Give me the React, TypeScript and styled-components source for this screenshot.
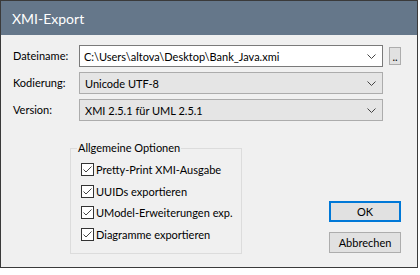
import React from "react";
import styled, { createGlobalStyle } from "styled-components";

const Global = createGlobalStyle`
  html, body { margin: 0; padding: 0; background: #ffffff; }
  body { font-family: Lato, "Liberation Sans", sans-serif; font-size: 11px; color: #000; }
  * { box-sizing: border-box; }
`;

const Window = styled.div`
  width: 418px;
  height: 268px;
  border: 1px solid #3a3a3a;
  background: #f0f0f0;
  display: flex;
  flex-direction: column;
`;

const TitleBar = styled.div`
  height: 34px;
  background: #65778a;
  color: #ffffff;
  font-size: 14px;
  display: flex;
  align-items: center;
  padding-left: 11px;
`;

const Body = styled.div`
  flex: 1;
  padding: 10px 16px 0 12px;
  display: flex;
  flex-direction: column;
`;

const Form = styled.div`
  display: grid;
  grid-template-columns: 66px 304px 1fr;
  row-gap: 5px;
  align-items: center;
`;

const Label = styled.div`
  height: 22px;
  line-height: 22px;
  white-space: nowrap;
`;

const Combo = styled.div<{ $editable?: boolean }>`
  height: 22px;
  display: flex;
  align-items: center;
  padding: 0 6px 0 ${(p) => (p.$editable ? "4px" : "5px")};
  background: ${(p) => (p.$editable ? "#ffffff" : "#e5e5e5")};
  border: 1px solid ${(p) => (p.$editable ? "#7a7a7a" : "#acacac")};
`;

const ComboText = styled.span`
  flex: 1;
  white-space: nowrap;
  overflow: hidden;
`;

const Browse = styled.div`
  justify-self: end;
  width: 12px;
  height: 18px;
  background: #e1e1e1;
  border: 1px solid #adadad;
  font-size: 11px;
  line-height: 11px;
  display: flex;
  align-items: flex-end;
  justify-content: center;
  padding-bottom: 2px;
  letter-spacing: 0;
`;

const Lower = styled.div`
  display: flex;
  align-items: flex-end;
  margin-top: 19px;
`;

const Group = styled.fieldset`
  margin: 0 0 0 57px;
  width: 172px;
  height: 114px;
  padding: 0;
  border: 1px solid #dcdcdc;
`;

const Legend = styled.legend`
  margin-left: 6px;
  padding: 0 1px;
  line-height: 16px;
`;

const CheckList = styled.div`
  display: flex;
  flex-direction: column;
  padding: 3px 0 0 10px;
`;

const CheckRow = styled.div`
  height: 21.6px;
  display: flex;
  align-items: center;
  gap: 2px;
  white-space: nowrap;
`;

const Box = styled.span`
  width: 13px;
  height: 13px;
  border: 1px solid #333333;
  background: #ffffff;
  display: flex;
  align-items: center;
  justify-content: center;
  flex: none;
`;

const Buttons = styled.div`
  margin-left: auto;
  display: flex;
  flex-direction: column;
  gap: 10px;
  margin-bottom: 1px;
`;

const Button = styled.div<{ $default?: boolean }>`
  width: 72px;
  height: 21px;
  background: #e1e1e1;
  border: ${(p) => (p.$default ? "2px solid #0078d7" : "1px solid #adadad")};
  display: flex;
  align-items: center;
  justify-content: center;
`;

const Chevron = () => (
  <svg width="9" height="5" viewBox="0 0 9 5">
    <polyline points="0.5,0.5 4.5,4.5 8.5,0.5" fill="none" stroke="#444" strokeWidth="1" />
  </svg>
);

const Check = () => (
  <svg width="11" height="11" viewBox="0 0 11 11">
    <polyline points="1.5,5.5 4,8 9.5,2.5" fill="none" stroke="#444" strokeWidth="1" />
  </svg>
);

const options = [
  "Pretty-Print XMI-Ausgabe",
  "UUIDs exportieren",
  "UModel-Erweiterungen exp.",
  "Diagramme exportieren",
];

export default function App() {
  return (
    <>
      <Global />
      <Window>
        <TitleBar>XMI-Export</TitleBar>
        <Body>
          <Form>
            <Label>Dateiname:</Label>
            <Combo $editable>
              <ComboText>C:\Users\altova\Desktop\Bank_Java.xmi</ComboText>
              <Chevron />
            </Combo>
            <Browse>..</Browse>
            <Label>Kodierung:</Label>
            <Combo>
              <ComboText>Unicode UTF-8</ComboText>
              <Chevron />
            </Combo>
            <span />
            <Label>Version:</Label>
            <Combo>
              <ComboText>XMI 2.5.1 für UML 2.5.1</ComboText>
              <Chevron />
            </Combo>
            <span />
          </Form>
          <Lower>
            <Group>
              <Legend>Allgemeine Optionen</Legend>
              <CheckList>
                {options.map((o) => (
                  <CheckRow key={o}>
                    <Box>
                      <Check />
                    </Box>
                    <span>{o}</span>
                  </CheckRow>
                ))}
              </CheckList>
            </Group>
            <Buttons>
              <Button $default>OK</Button>
              <Button>Abbrechen</Button>
            </Buttons>
          </Lower>
        </Body>
      </Window>
    </>
  );
}
